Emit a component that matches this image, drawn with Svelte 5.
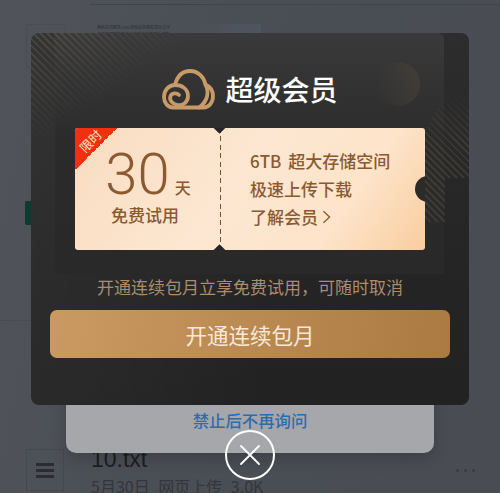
<script>
  const perks = ['6TB 超大存储空间', '极速上传下载'];
</script>

<div class="page">
  <div class="list">
    <div class="row top-row">
      <div class="thumb-box"></div>
      <div class="notice">
        <p>系统会员服务(100)登陆后将推荐显示文字</p>
        <p>文件管理服务条款已更新内容请查看详情</p>
      </div>
      <div class="picture"><span class="green"></span></div>
    </div>
    <div class="row mid-row">
      <span class="tab"></span>
    </div>
    <div class="row mid-row short"></div>
    <div class="row file-row">
      <div class="file-icon">
        <span></span><span></span><span></span>
      </div>
      <div class="file-info">
        <div class="file-name">10.txt</div>
        <div class="file-meta">5月30日 网页上传 3.0K</div>
      </div>
      <div class="more">
        <i></i><i></i><i></i>
      </div>
    </div>
  </div>

  <div class="sheet">
    <span class="forbid">禁止后不再询问</span>
  </div>

  <div class="modal">
    <div class="inner-glow"></div>
    <div class="stripes stripes-left"></div>
    <div class="stripes stripes-right"></div>
    <div class="sun"></div>

    <div class="title">
      <svg class="cloud" viewBox="0 0 53 41" width="53" height="41" fill="none" stroke="#c79a68" stroke-width="3.8" stroke-linecap="round" stroke-linejoin="round">
        <path d="M11 38.5C5.5 38.5 2 33.5 2 28C2 21 7 16 13 16C15 8 20 2 28 2C36 2 42 8 43.5 15.5C48 17.5 51 22 51 27C51 33.5 47 38.5 41 38.5Z" />
        <path d="M13 16C20 16 26 20 26 27C26 33 21 37 15.5 36C10 35 7 31 8.5 27C10 24 14.5 23.5 17 26" />
        <path d="M43.5 15.5C47 22 46.5 32 37 38.5" />
      </svg>
      <span>超级会员</span>
    </div>

    <div class="ticket">
      <div class="ribbon"><span>限时</span></div>
      <div class="stub">
        <div class="amount"><b>30</b><span>天</span></div>
        <div class="trial">免费试用</div>
      </div>
      <div class="perks">
        {#each perks as perk}
          <div>{perk}</div>
        {/each}
        <div class="learn">
          了解会员
          <svg viewBox="0 0 10 16" width="9" height="14" fill="none" stroke="#8b5a30" stroke-width="1.5"><path d="M1.5 1.5L8.5 8L1.5 14.5" /></svg>
        </div>
      </div>
      <span class="notch notch-top"></span>
      <span class="notch notch-bottom"></span>
      <span class="notch-right"></span>
    </div>

    <p class="caption">开通连续包月立享免费试用&#65292;可随时取消</p>
    <button class="open">开通连续包月</button>
  </div>

  <button class="close" aria-label="关闭">
    <svg viewBox="0 0 24 24" width="24" height="24" stroke="#fff" stroke-width="1.8" stroke-linecap="round"><path d="M3 3L21 21M21 3L3 21" /></svg>
  </button>
</div>

<style>
  :global(body) {
    margin: 0;
  }
  .page {
    position: relative;
    width: 500px;
    height: 493px;
    overflow: hidden;
    background: linear-gradient(100deg, #50545a 0%, #4a4e55 40%, #494c53 100%);
    font-family: "Noto Sans CJK SC", "Liberation Sans", sans-serif;
  }

  /* dimmed list behind the dialogs */
  .list {
    padding-top: 4px;
  }
  .row {
    display: flex;
    margin-left: 90px;
    border-top: 1px solid #3f434a;
  }
  .top-row {
    height: 316px;
    gap: 10px;
    padding: 19px 0 0 7px;
    box-sizing: border-box;
  }
  .thumb-box {
    position: absolute;
    left: 26px;
    top: 24px;
    width: 38px;
    height: 42px;
    border: 1px solid #484c53;
  }
  .notice {
    width: 84px;
    font-size: 4px;
    line-height: 7px;
    color: #2c2e33;
  }
  .notice p {
    margin: 0;
    white-space: nowrap;
  }
  .picture {
    position: relative;
    margin-left: 4px;
    width: 66px;
    height: 60px;
    background: linear-gradient(100deg, #4b4f56, #4f5662);
  }
  .green {
    position: absolute;
    left: 17px;
    top: 11px;
    width: 16px;
    height: 16px;
    border-radius: 50%;
    background: #20503a;
  }
  .mid-row {
    height: 22px;
    margin-left: 0;
    position: relative;
    border-top: 1px solid #474b52;
  }
  .tab {
    position: absolute;
    left: 25px;
    top: -120px;
    width: 6px;
    height: 24px;
    border-radius: 2px 0 0 2px;
    background: #0f3a32;
  }
  .short {
    height: 87px;
    margin-left: 90px;
  }
  .file-row {
    margin-left: 0;
    border-top: none;
    padding: 18px 25px 0 26px;
    gap: 27px;
  }
  .file-icon {
    flex: none;
    width: 38px;
    height: 42px;
    border: 1px solid #44484f;
    box-sizing: border-box;
    display: flex;
    flex-direction: column;
    justify-content: center;
    align-items: center;
    gap: 3px;
  }
  .file-icon span {
    width: 18px;
    height: 3px;
    background: #2a2d33;
  }
  .file-info {
    flex: 1;
    margin-top: -4px;
  }
  .file-name {
    font-family: "Liberation Sans", sans-serif;
    font-size: 23px;
    line-height: 28px;
    color: #1c1e22;
  }
  .file-meta {
    margin-top: 1px;
    font-size: 16px;
    line-height: 24px;
    word-spacing: 5px;
    white-space: nowrap;
    color: #34363b;
  }
  .more {
    display: flex;
    gap: 5px;
    padding-top: 20px;
  }
  .more i {
    width: 3px;
    height: 3px;
    border-radius: 50%;
    background: #3a3d43;
  }

  /* system sheet peeking under the promo */
  .sheet {
    position: absolute;
    left: 66px;
    top: 380px;
    width: 368px;
    height: 73px;
    box-sizing: border-box;
    padding-top: 27px;
    border-radius: 0 0 10px 10px;
    background: #a5a7ab;
    box-shadow: 0 6px 16px rgba(0, 0, 0, 0.18);
    text-align: center;
  }
  .forbid {
    font-size: 16.4px;
    font-weight: 500;
    line-height: 26px;
    color: #2f6cab;
  }

  /* promo dialog */
  .modal {
    position: absolute;
    left: 31px;
    top: 33px;
    width: 438px;
    height: 372px;
    overflow: hidden;
    box-sizing: border-box;
    display: flex;
    flex-direction: column;
    align-items: center;
    border-radius: 8px;
    background:
      linear-gradient(90deg, rgba(255, 255, 255, 0.035), transparent 55%),
      linear-gradient(180deg, #2d2d2d 0%, #252525 60%, #222222 100%);
  }
  .inner-glow {
    position: absolute;
    left: 24px;
    top: 0;
    width: 389px;
    height: 241px;
    border-radius: 0 6px 0 0;
    background: linear-gradient(180deg, #3a3a3b 0%, #2b2b2b 45%, #292929 100%);
  }
  .stripes {
    position: absolute;
    background: repeating-linear-gradient(45deg, rgba(190, 165, 125, 0.17) 0 2px, transparent 2px 5px);
  }
  .stripes-left {
    left: 0;
    top: 0;
    width: 170px;
    height: 120px;
    mask-image: linear-gradient(to bottom right, #000 5%, transparent 50%);
  }
  .stripes-right {
    left: 384px;
    top: 59px;
    width: 54px;
    height: 130px;
    opacity: 0.8;
    clip-path: polygon(30px 0, 54px 0, 54px 86px, 30px 86px, 30px 130px, 0 130px, 0 60px);
    mask-image: linear-gradient(180deg, transparent 0, #000 40%, #000 100%);
  }
  .sun {
    position: absolute;
    left: 345px;
    top: 29px;
    width: 44px;
    height: 44px;
    border-radius: 50%;
    background: linear-gradient(90deg, rgba(110, 95, 70, 0), rgba(110, 95, 70, 0.22));
  }
  .title {
    position: relative;
    display: flex;
    align-items: center;
    gap: 10px;
    height: 41px;
    margin-top: 36px;
  }
  .title span {
    font-size: 28px;
    font-weight: 500;
    line-height: 41px;
    color: #fff;
  }
  .ticket {
    position: relative;
    display: flex;
    flex: none;
    width: 350px;
    height: 122px;
    margin-top: 18px;
    overflow: hidden;
    border-radius: 3px;
    background: linear-gradient(125deg, #f8dcc0 0%, #fde7d2 45%, #fde4ca 75%, #f9cd9f 100%);
    color: #8b5a30;
  }
  .ribbon {
    position: absolute;
    left: 0;
    top: 0;
    width: 42px;
    height: 42px;
    background: linear-gradient(135deg, #f0300f 50%, transparent 50%);
  }
  .ribbon span {
    position: absolute;
    left: 3px;
    top: 6px;
    font-size: 12.5px;
    line-height: 14px;
    white-space: nowrap;
    color: #fde6d4;
    transform: rotate(-45deg);
  }
  .stub {
    flex: none;
    display: flex;
    flex-direction: column;
    align-items: center;
    width: 146px;
    box-sizing: border-box;
    padding: 16px 6px 0 0;
    background: repeating-linear-gradient(180deg, #7b5230 0 5px, transparent 5px 8.4px) right / 1.5px 100% no-repeat;
  }
  .amount {
    display: flex;
    align-items: baseline;
    gap: 5px;
    height: 58px;
    line-height: 60px;
    padding-left: 6px;
  }
  .amount b {
    font-family: "Roboto", "Liberation Sans", sans-serif;
    font-weight: 300;
    font-size: 58px;
  }
  .amount span {
    font-size: 16px;
    font-weight: 500;
  }
  .trial {
    margin-top: 0;
    font-size: 17px;
    font-weight: 500;
    line-height: 26px;
  }
  .perks {
    flex: 1;
    padding: 19px 0 0 29px;
    font-size: 17px;
    font-weight: 500;
    line-height: 28px;
    word-spacing: 3px;
    white-space: nowrap;
  }
  .learn {
    display: flex;
    align-items: center;
    gap: 4px;
  }
  .notch {
    position: absolute;
    left: 140px;
    width: 9px;
    height: 9px;
    background: #262626;
    transform: rotate(45deg);
  }
  .notch-top {
    top: -5px;
  }
  .notch-bottom {
    bottom: -5px;
  }
  .notch-right {
    position: absolute;
    right: -16px;
    top: 48px;
    width: 26px;
    height: 26px;
    border-radius: 50%;
    background: #2b2b2a;
  }
  .caption {
    position: relative;
    margin: 24px 0 0;
    font-size: 17px;
    line-height: 26px;
    color: #ab8d6e;
  }
  .open {
    position: relative;
    flex: none;
    width: 400px;
    height: 48px;
    margin-top: 10px;
    border: none;
    border-radius: 7px;
    background: linear-gradient(100deg, #cb9a63, #ab7a42);
    font-family: inherit;
    font-size: 21.5px;
    color: #f8e8d6;
  }
  .close {
    position: absolute;
    left: 225px;
    top: 430px;
    width: 50px;
    height: 50px;
    padding: 0;
    display: flex;
    align-items: center;
    justify-content: center;
    border: 2px solid #fff;
    border-radius: 50%;
    background: transparent;
    box-sizing: border-box;
  }
</style>
